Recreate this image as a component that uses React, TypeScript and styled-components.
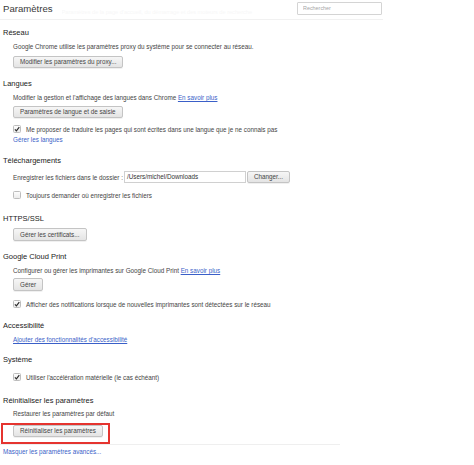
import styled, { createGlobalStyle } from 'styled-components';

const GlobalStyle = createGlobalStyle`
  html, body {
    margin: 0;
    padding: 0;
    background: #ffffff;
  }
  body {
    font-family: "Liberation Sans", Arial, sans-serif;
    color: #333333;
  }
`;

const Page = styled.div({
  width: 474,
  height: 465,
  overflow: 'hidden',
  boxSizing: 'border-box',
});

const Header = styled.div({
  display: 'flex',
  alignItems: 'center',
  width: 383,
  height: 20,
  paddingLeft: 3,
  boxSizing: 'border-box',
  borderBottom: '1px solid #f1f1f1',
});

const Title = styled.h1({
  margin: 0,
  marginTop: -2,
  fontSize: 9.6,
  fontWeight: 'normal',
  color: '#3a3a3a',
  lineHeight: '14px',
});

const GhostText = styled.span({
  flex: 1,
  marginLeft: 9,
  marginTop: 4,
  fontSize: 5.6,
  color: '#f7f7f7',
  whiteSpace: 'nowrap',
  overflow: 'hidden',
});

const SearchBox = styled.input({
  width: 85,
  height: 13,
  boxSizing: 'border-box',
  border: '1px solid #d4d4d4',
  borderRadius: 1,
  padding: '0 0 0 5px',
  margin: '0 1px 3px 30px',
  fontFamily: '"Liberation Sans", Arial, sans-serif',
  fontSize: 5.4,
  color: '#333',
  outline: 'none',
  '&::placeholder': {
    color: '#a6a6a6',
  },
});

const Body = styled.div({
  paddingLeft: 3,
});

const Heading = styled.h3<{ $top: number }>((props) => ({
  margin: 0,
  marginTop: props.$top,
  height: 10,
  lineHeight: '10px',
  fontSize: 7.5,
  fontWeight: 'normal',
  color: '#222222',
  whiteSpace: 'nowrap',
}));

const Indent = styled.div({
  marginLeft: 10,
});

const Text = styled.div<{ $top: number }>((props) => ({
  marginTop: props.$top,
  height: 10,
  lineHeight: '10px',
  fontSize: 6.3,
  color: '#444444',
  whiteSpace: 'nowrap',
}));

const Link = styled.a<{ $underline?: boolean }>((props) => ({
  color: '#3a5fc8',
  textDecoration: props.$underline ? 'underline' : 'none',
  cursor: 'pointer',
}));

const Button = styled.button<{ $top: number; $height?: number }>((props) => ({
  display: 'block',
  marginTop: props.$top,
  height: props.$height ?? 12,
  padding: '0 6px',
  boxSizing: 'border-box',
  border: '1px solid #c4c4c4',
  borderRadius: 2,
  background: 'linear-gradient(#f6f6f6, #e4e4e4)',
  boxShadow: '0 1px 0 rgba(0, 0, 0, 0.06)',
  fontFamily: '"Liberation Sans", Arial, sans-serif',
  fontSize: 6.3,
  lineHeight: '10px',
  color: '#444444',
  whiteSpace: 'nowrap',
}));

const CheckRow = styled.label<{ $top: number }>((props) => ({
  display: 'flex',
  alignItems: 'center',
  gap: 5,
  marginTop: props.$top,
  height: 10,
  fontSize: 6.3,
  color: '#444444',
  whiteSpace: 'nowrap',
}));

const CheckBox = styled.span({
  display: 'flex',
  alignItems: 'center',
  justifyContent: 'center',
  width: 6,
  height: 6,
  border: '1px solid #bdbdbd',
  borderRadius: 1.5,
  background: 'linear-gradient(#fdfdfd, #ececec)',
});

const FolderRow = styled.div({
  display: 'flex',
  alignItems: 'center',
  marginTop: 5,
  height: 12,
  fontSize: 6.3,
  color: '#444444',
  whiteSpace: 'nowrap',
});

const FolderLabel = styled.span({
  width: 111,
});

const PathField = styled.div({
  width: 122,
  height: 12,
  boxSizing: 'border-box',
  border: '1px solid #d0d0d0',
  paddingLeft: 2,
  lineHeight: '10px',
  marginRight: 1,
  color: '#333333',
});

const Highlight = styled.div({
  display: 'inline-block',
  marginTop: 2,
  marginLeft: -12,
  padding: '0 5px 5px 10px',
  border: '2px solid #e5342f',
});

const Divider = styled.div({
  width: 340,
  marginLeft: -3,
  borderTop: '1px solid #efefef',
});

const Footer = styled.div({
  marginTop: 2,
  height: 10,
  lineHeight: '10px',
  fontSize: 6.3,
});

function Check({ checked }: { checked?: boolean }) {
  return (
    <CheckBox>
      {checked && (
        <svg width="6" height="6" viewBox="0 0 10 10">
          <path d="M1.5 5.5 L4 8 L8.8 1.8" fill="none" stroke="#2a2a2a" strokeWidth="1.9" />
        </svg>
      )}
    </CheckBox>
  );
}

export default function App() {
  return (
    <Page>
      <GlobalStyle />
      <Header>
        <Title>Paramètres</Title>
        <GhostText>Paramètres de la page d&apos;accueil, du démarrage et des moteurs de recherche</GhostText>
        <SearchBox placeholder="Rechercher" />
      </Header>
      <Body>
        <Heading $top={8}>Réseau</Heading>
        <Indent>
          <Text $top={4}>Google Chrome utilise les paramètres proxy du système pour se connecter au réseau.</Text>
          <Button $top={4}>Modifier les paramètres du proxy...</Button>
        </Indent>

        <Heading $top={11}>Langues</Heading>
        <Indent>
          <Text $top={4}>
            Modifier la gestion et l&apos;affichage des langues dans Chrome{' '}
            <Link $underline>En savoir plus</Link>
          </Text>
          <Button $top={3}>Paramètres de langue et de saisie</Button>
          <CheckRow $top={6}>
            <Check checked />
            Me proposer de traduire les pages qui sont écrites dans une langue que je ne connais pas
          </CheckRow>
          <Text $top={1}>
            <Link>Gérer les langues</Link>
          </Text>
        </Indent>

        <Heading $top={11}>Téléchargements</Heading>
        <Indent>
          <FolderRow>
            <FolderLabel>Enregistrer les fichiers dans le dossier :</FolderLabel>
            <PathField>/Users/michel/Downloads</PathField>
            <Button $top={0}>Changer...</Button>
          </FolderRow>
          <CheckRow $top={7}>
            <Check />
            Toujours demander où enregistrer les fichiers
          </CheckRow>
        </Indent>

        <Heading $top={14}>HTTPS/SSL</Heading>
        <Indent>
          <Button $top={4} $height={13}>Gérer les certificats...</Button>
        </Indent>

        <Heading $top={11}>Google Cloud Print</Heading>
        <Indent>
          <Text $top={4}>
            Configurer ou gérer les imprimantes sur Google Cloud Print{' '}
            <Link $underline>En savoir plus</Link>
          </Text>
          <Button $top={2} $height={13}>Gérer</Button>
          <CheckRow $top={8}>
            <Check checked />
            Afficher des notifications lorsque de nouvelles imprimantes sont détectées sur le réseau
          </CheckRow>
        </Indent>

        <Heading $top={12}>Accessibilité</Heading>
        <Indent>
          <Text $top={4}>
            <Link $underline>Ajouter des fonctionnalités d&apos;accessibilité</Link>
          </Text>
        </Indent>

        <Heading $top={10}>Système</Heading>
        <Indent>
          <CheckRow $top={7}>
            <Check checked />
            Utiliser l&apos;accélération matérielle (le cas échéant)
          </CheckRow>
        </Indent>

        <Heading $top={14}>Réinitialiser les paramètres</Heading>
        <Indent>
          <Text $top={3}>Restaurer les paramètres par défaut</Text>
          <Highlight>
            <Button $top={0}>Réinitialiser les paramètres</Button>
          </Highlight>
        </Indent>
        <Divider />
        <Footer>
          <Link>Masquer les paramètres avancés...</Link>
        </Footer>
      </Body>
    </Page>
  );
}
